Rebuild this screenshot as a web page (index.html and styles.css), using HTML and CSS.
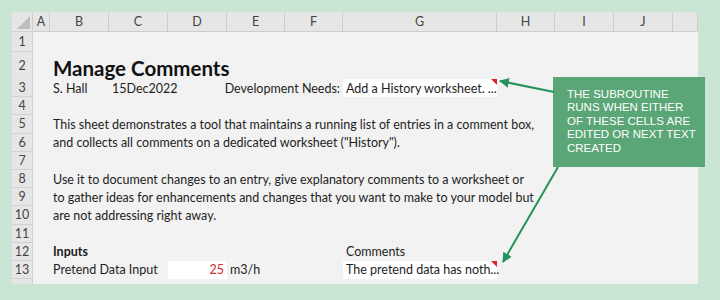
FILE: index.html
```html
<!DOCTYPE html>
<html lang="en">
<head>
  <meta charset="UTF-8" />
  <title>Manage Comments</title>
  <link rel="stylesheet" href="styles.css">
</head>
<body>

<div class="sheet">
  <div class="row head">
    <div class="rh corner"><span class="tri"></span></div>
    <div class="ch">A</div><div class="ch">B</div><div class="ch">C</div><div class="ch">D</div>
    <div class="ch">E</div><div class="ch">F</div><div class="ch">G</div><div class="ch">H</div>
    <div class="ch">I</div><div class="ch">J</div><div class="ch"></div>
  </div>

  <div class="row r1"><div class="rh">1</div></div>

  <div class="row r2">
    <div class="rh">2</div>
    <div class="c title span-b">Manage Comments</div>
  </div>

  <div class="row">
    <div class="rh">3</div>
    <div class="c col-b">S. Hall</div>
    <div class="c col-c">15Dec2022</div>
    <div class="c right d-to-f">Development Needs:</div>
    <div class="c col-g white note">Add a History worksheet. ...</div>
  </div>

  <div class="row"><div class="rh">4</div></div>
  <div class="row">
    <div class="rh">5</div>
    <div class="c span-b">This sheet demonstrates a tool that maintains a running list of entries in a comment box,</div>
  </div>
  <div class="row">
    <div class="rh">6</div>
    <div class="c span-b">and collects all comments on a dedicated worksheet ("History").</div>
  </div>
  <div class="row"><div class="rh">7</div></div>
  <div class="row">
    <div class="rh">8</div>
    <div class="c span-b">Use it to document changes to an entry, give explanatory comments to a worksheet or</div>
  </div>
  <div class="row">
    <div class="rh">9</div>
    <div class="c span-b">to gather ideas for enhancements and changes that you want to make to your model but</div>
  </div>
  <div class="row">
    <div class="rh">10</div>
    <div class="c span-b">are not addressing right away.</div>
  </div>
  <div class="row"><div class="rh">11</div></div>
  <div class="row">
    <div class="rh">12</div>
    <div class="c col-b bold">Inputs</div>
    <div class="c col-g">Comments</div>
  </div>
  <div class="row">
    <div class="rh">13</div>
    <div class="c b-to-c">Pretend Data Input</div>
    <div class="c col-d white right red">25</div>
    <div class="c col-e">m3/h</div>
    <div class="c col-g white note">The pretend data has noth...</div>
  </div>
  <div class="row r14"><div class="rh"></div></div>
</div>

<div class="callout">
  <div>THE SUBROUTINE</div>
  <div>RUNS WHEN EITHER</div>
  <div>OF THESE CELLS ARE</div>
  <div>EDITED OR NEXT TEXT</div>
  <div>CREATED</div>
</div>

<svg class="arrows" width="720" height="300" viewBox="0 0 720 300">
  <defs>
    <marker id="head" viewBox="0 0 10 10" refX="9" refY="5" markerWidth="5" markerHeight="5" orient="auto">
      <path d="M0 0 L10 5 L0 10 Z" fill="#23935a"/>
    </marker>
  </defs>
  <line x1="554" y1="92" x2="500" y2="81" stroke="#23935a" stroke-width="2" marker-end="url(#head)"/>
  <line x1="558" y1="167" x2="503" y2="262" stroke="#23935a" stroke-width="2" marker-end="url(#head)"/>
</svg>

</body>
</html>
```

FILE: styles.css
```css
body {
  margin: 0;
  background: #c8e6d3;
  width: 720px;
  height: 300px;
  overflow: hidden;
  position: relative;
  font-family: Lato, "Open Sans", sans-serif;
  color: #1e1e1e;
}

.sheet { margin: 12px; width: 686px; height: 272px; background: #f2f2f2; overflow: hidden; }

.row {
  display: grid;
  grid-template-columns: 21px 17px 59px 59px 59px 58px 58px 154px 58px 59px 59px 25px;
  height: 18.2px;
  font-size: 12.5px;
}
.row.head { height: 20px; background: #e6e6e6; }
.row.r1 { height: 20px; }
.row.r2 { height: 27px; }

.rh {
  grid-column: 1;
  background: #e6e6e6;
  border-bottom: 1px solid #d2d2d2;
  border-right: 1px solid #cfcfcf;
  box-sizing: border-box;
  text-align: center;
  color: #444;
  font-size: 12.5px;
  display: flex; align-items: center; justify-content: center;
}
.corner { position: relative; }
.corner .tri {
  position: absolute; right: 2px; bottom: 2px;
  border-left: 13px solid transparent; border-bottom: 13px solid #bdbdbd;
}
.ch {
  border-right: 1px solid #cdcdcd;
  border-bottom: 1px solid #cdcdcd;
  box-sizing: border-box;
  text-align: center;
  color: #444;
  font-size: 12.5px;
  line-height: 19px;
}

.c { white-space: nowrap; padding-left: 3px; display: flex; align-items: center; overflow: visible; }
.right { justify-content: flex-end; padding-left: 0; padding-right: 3px; }
.white { background: #fff; }
.red { color: #d42a2a; }
.bold { font-weight: bold; }
.title { font-size: 20.5px; font-weight: bold; color: #111; padding-top: 4px; }

.col-b { grid-column: 3; }
.col-c { grid-column: 4; }
.col-d { grid-column: 5; }
.col-e { grid-column: 6; }
.col-g { grid-column: 8; }
.span-b { grid-column: 3 / 12; }
.b-to-c { grid-column: 3 / 5; }
.d-to-f { grid-column: 5 / 8; }

.note { position: relative; }
.note::after {
  content: "";
  position: absolute; top: 0; right: 0;
  border-left: 6px solid transparent; border-top: 6px solid #d9252a;
}

.callout {
  position: absolute;
  left: 553px; top: 77px;
  width: 152px; height: 90px;
  box-sizing: border-box;
  padding: 11px 0 0 14px;
  background: #5aa676;
  color: #fff;
  font-family: "Liberation Sans Narrow", "Liberation Sans", sans-serif;
  font-size: 11.5px;
  line-height: 13.4px;
  white-space: nowrap;
}

.arrows { position: absolute; left: 0; top: 0; pointer-events: none; }
```
